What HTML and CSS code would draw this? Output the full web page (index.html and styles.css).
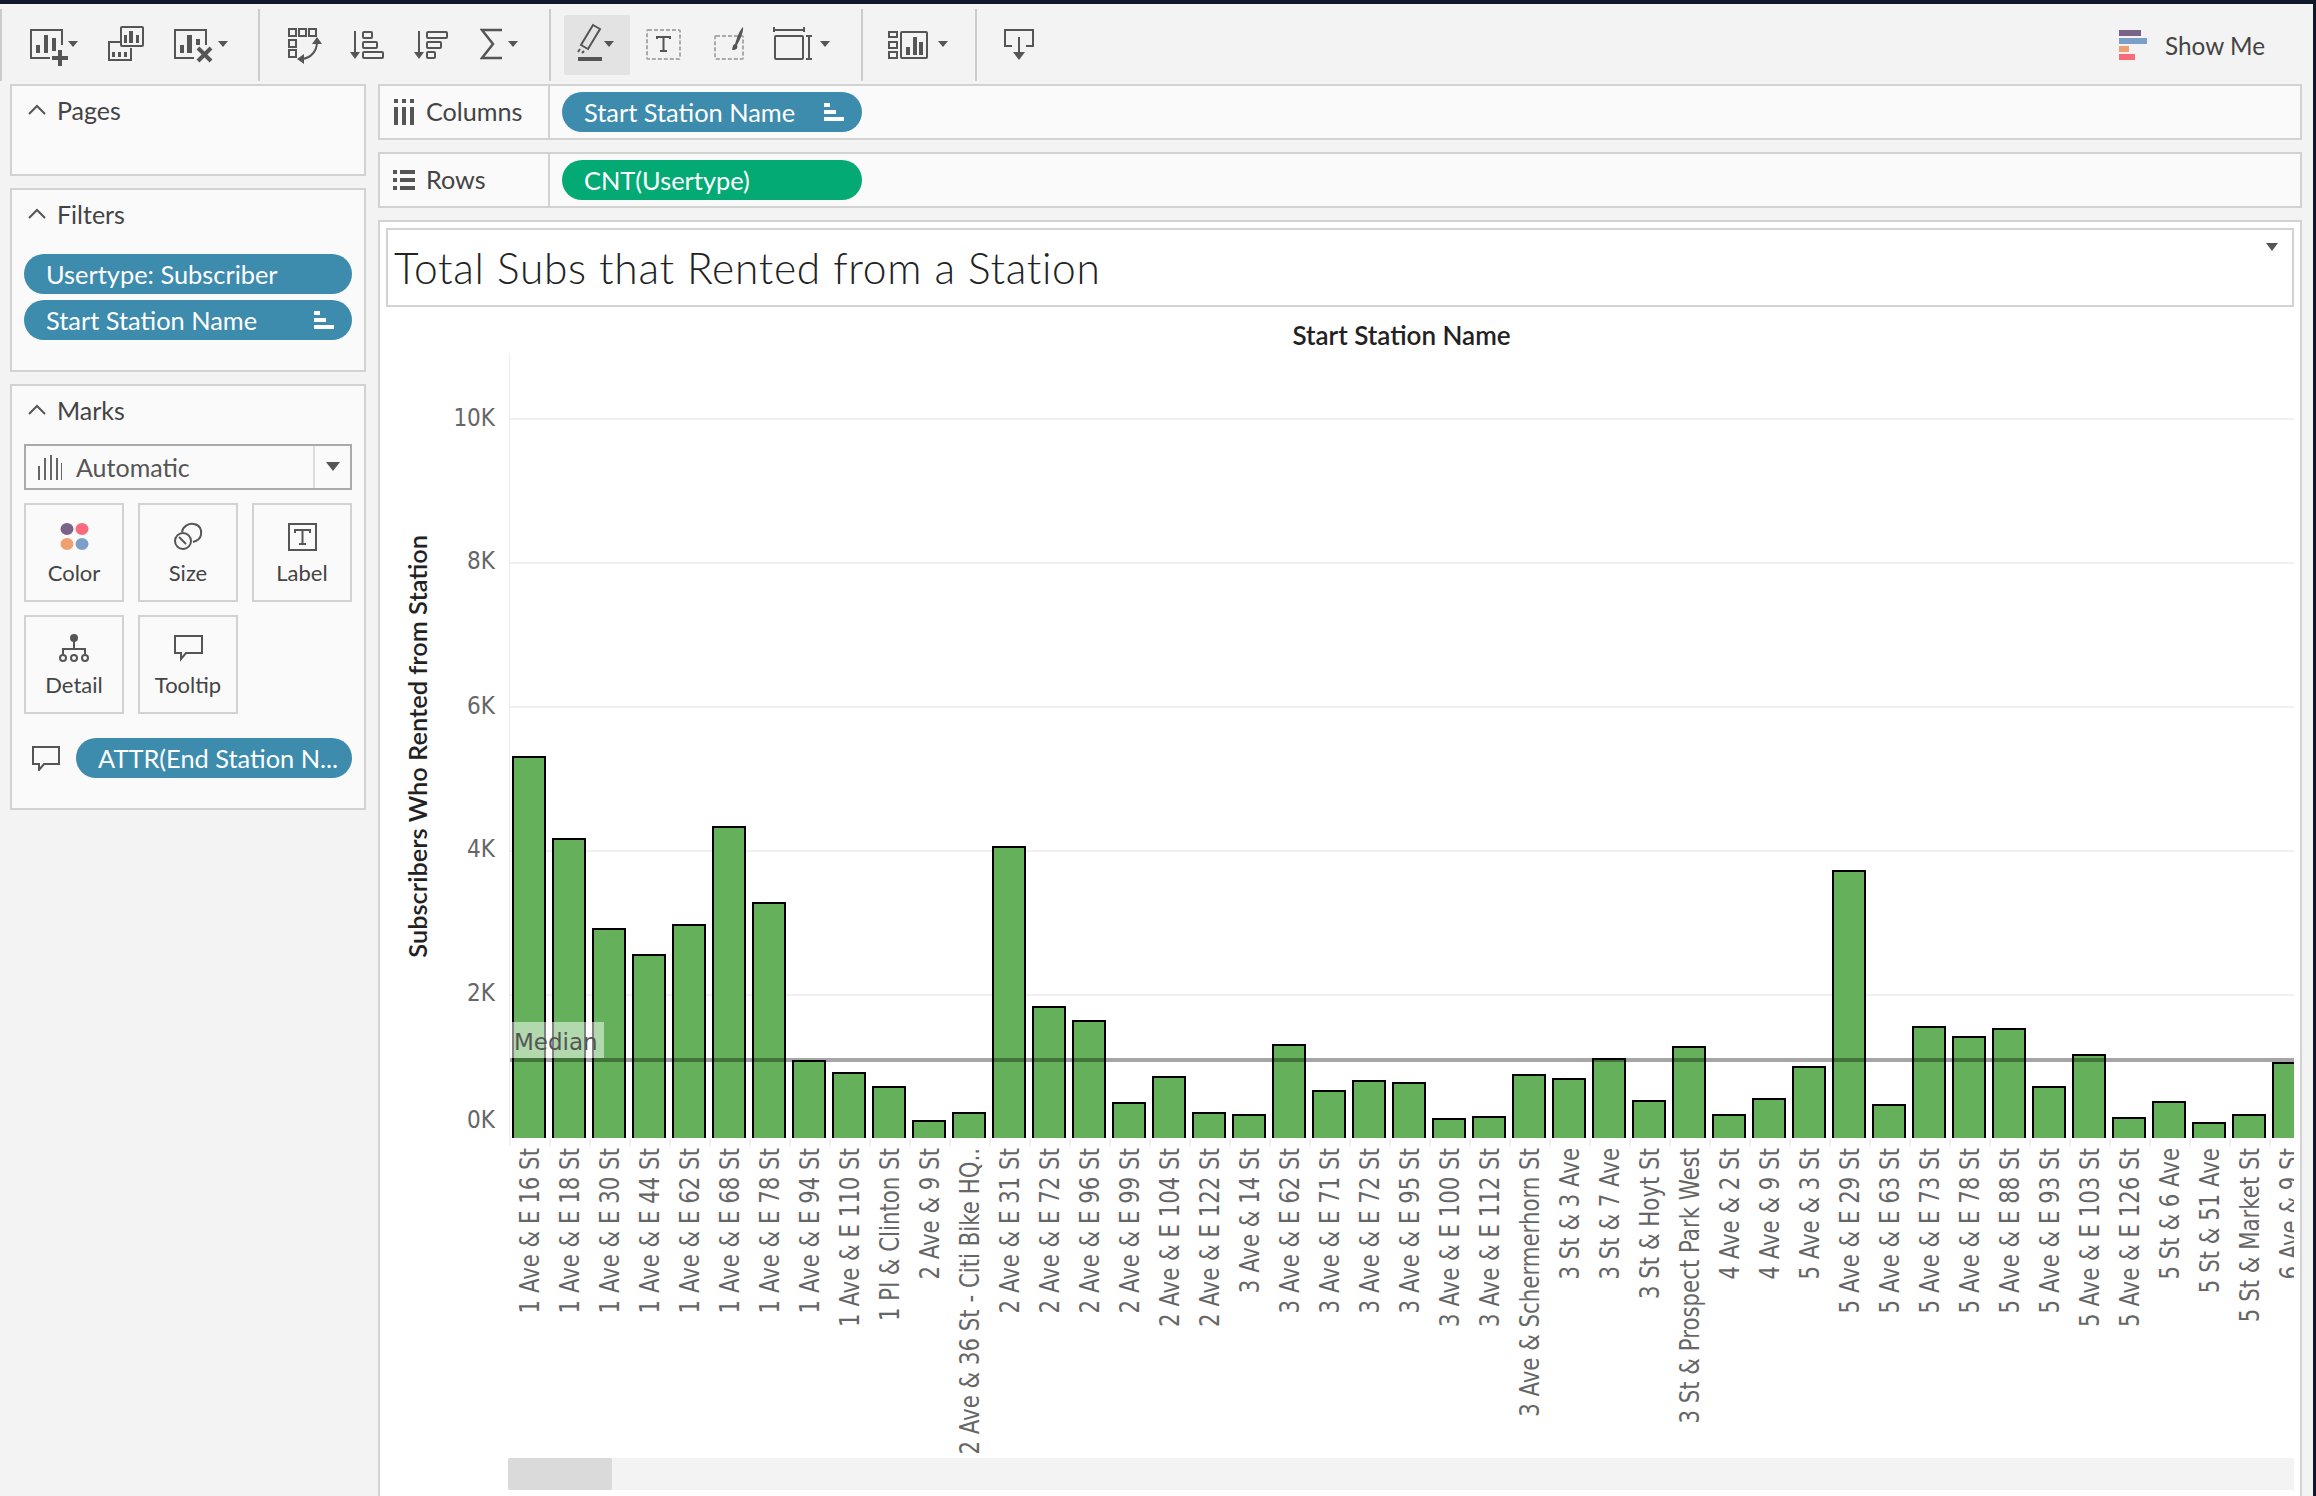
FILE: index.html
```html
<!DOCTYPE html>
<html lang="en">
<head>
<meta charset="utf-8">
<title>Total Subs that Rented from a Station</title>
<link rel="stylesheet" href="styles.css">
</head>
<body>
<div class="app">
  <header class="toolbar">
    <div class="tgroup tg1">
      <svg class="ic" width="48" height="60"><path class="ln" d="M32 30V15H1V43H20"/><path class="fl" d="M6 30h4v8H6zM14 20h4v18h-4zM22 23h4v13h-4zM22 41h16v4H22zM28 35h4v16h-4zM38 26h10l-5 6z"/></svg>
      <svg class="ic" width="36" height="60"><rect class="ln" x="13" y="12" width="22" height="19" rx="1"/><path class="ln" d="M12 27H1V45H23V33"/><path class="fl" d="M16 20h3v8h-3zM21 16h4v12h-4zM28 20h3v8h-3zM4 37h3v5H4zM10 37h3v5h-3zM16 37h3v5h-3z"/></svg>
      <svg class="ic" width="54" height="60"><path class="ln" d="M32 30V15H1V43H20"/><path class="fl" d="M6 30h4v8H6zM13 20h5v18h-5zM22 24h4v6h-4zM44 26h10l-5 6z"/><path class="lnb" d="M24 33l13 13M37 33L24 46"/></svg>
    </div>
    <div class="tgroup tg2">
      <svg class="ic" width="34" height="60"><path class="ln" d="M1 14h7v7H1zM11 14h7v7h-7zM21 14h7v7h-7zM1 25h7v7H1zM1 35h7v7H1zM29 27C29 36 23 43 14 44"/><path class="fl" d="M29 22l5 7H24zM9 44l7-5v10z"/></svg>
      <svg class="ic" width="36" height="60"><path class="ln" d="M5 16V38"/><path class="fl" d="M0 37h10l-5 7z"/><rect class="ln" x="13" y="17" width="9" height="6" rx="1"/><rect class="ln" x="13" y="27" width="14" height="6" rx="1"/><rect class="ln" x="13" y="37" width="20" height="6" rx="1"/></svg>
      <svg class="ic" width="38" height="60"><path class="ln" d="M5 16V38"/><path class="fl" d="M0 37h10l-5 7z"/><rect class="ln" x="13" y="17" width="20" height="6" rx="1"/><rect class="ln" x="13" y="27" width="14" height="6" rx="1"/><rect class="ln" x="13" y="37" width="8" height="6" rx="1"/></svg>
      <svg class="ic" width="38" height="60"><path class="lnm" d="M22 15H2L13 29 2 43H22"/><path class="fl" d="M28 26h10l-5 6z"/></svg>
    </div>
    <div class="tgroup tg3">
      <svg class="ic active" width="66" height="60"><path class="ln" d="M29 10l7 4-12 20-7-4z"/><path class="ln" d="M16 34l-2 3M20 36l-2 2"/><path class="fl" d="M14 42h24v4H14zM40 26h10l-5 6z"/></svg>
      <svg class="ic" width="67" height="60"><rect class="dash" x="17" y="15" width="33" height="29" rx="1"/><path class="ln" d="M27 24V22H40V24M33.500 22V36M30 36H37"/></svg>
      <svg class="ic" width="62" height="60"><rect class="dash" x="18" y="21" width="28" height="23" rx="1"/><path class="fl" d="M46 12c1 4-3 13-6 18 1 3 0 5-5 5 1-2 0-5 3-6 2-6 4-13 8-17z"/></svg>
      <svg class="ic" width="71" height="60"><path class="ln" d="M15 12V17M45 12V17M15 15H45"/><rect class="ln" x="16" y="21" width="28" height="23" rx="1"/><path class="ln" d="M47 21H53M47 44H53M50 21V44"/><path class="fl" d="M61 26h10l-5 6z"/></svg>
    </div>
    <div class="tgroup tg4">
      <svg class="ic" width="60" height="60"><path class="ln" d="M1 17h8v5H1zM1 27h8v6H1zM1 37h8v6H1z"/><rect class="ln" x="13" y="17" width="26" height="26" rx="1"/><path class="fl" d="M18 32h4v8h-4zM25 22h4v18h-4zM31 27h4v13h-4zM50 26h10l-5 6z"/></svg>
    </div>
    <div class="tgroup tg5">
      <svg class="ic" width="38" height="60"><path class="ln" d="M8 31H1V15H29V31H22M15 22V38"/><path class="fl" d="M9 37H21L15 45z"/></svg>
    </div>
    <div class="showme">
      <span class="sm-icon"><i class="sm1"></i><i class="sm2"></i><i class="sm3"></i><i class="sm4"></i></span>
      <span class="sm-text">Show Me</span>
    </div>
  </header>

  <div class="body">
    <aside class="sidebar">
      <section class="panel pages">
        <h2 class="phead"><svg class="chev" width="20" height="12"><path d="M2 10l8-8 8 8"/></svg>Pages</h2>
      </section>
      <section class="panel filters">
        <h2 class="phead"><svg class="chev" width="20" height="12"><path d="M2 10l8-8 8 8"/></svg>Filters</h2>
        <div class="pill blue fpill">Usertype: Subscriber</div>
        <div class="pill blue fpill">Start Station Name<span class="sort sort-end"><i></i><i></i><i></i></span></div>
      </section>
      <section class="panel marks">
        <h2 class="phead"><svg class="chev" width="20" height="12"><path d="M2 10l8-8 8 8"/></svg>Marks</h2>
        <div class="dropdown">
          <svg class="marktype" width="26" height="26"><path d="M2 12h2v14H2zM8 4h2v22H8zM14 1h2v25h-2zM20 4h2v22h-2zM25 9h1v17h-1z"/></svg>
          <span class="ddtext">Automatic</span>
          <span class="ddarrow"></span>
        </div>
        <div class="cards">
          <div class="card">
            <svg width="32" height="32"><ellipse cx="9" cy="8" rx="6.500" ry="6" fill="#7b6388"/><ellipse cx="24" cy="8" rx="6.500" ry="6" fill="#f96b7a"/><ellipse cx="9" cy="23" rx="6.500" ry="6" fill="#f0a070"/><ellipse cx="24" cy="23" rx="6.500" ry="6" fill="#7b9fc6"/></svg>
            <span>Color</span>
          </div>
          <div class="card">
            <svg width="32" height="32"><path class="ln" d="M10 11C11 5 17 2 22 3c6 1 8 6 7 11-1 4-4 6-8 7"/><circle class="ln" cx="11" cy="20" r="8"/><path class="ln" d="M7 16l7 7"/></svg>
            <span>Size</span>
          </div>
          <div class="card">
            <svg width="32" height="32"><rect class="ln" x="3" y="3" width="27" height="26"/><path class="ln" d="M9 12V9H24V12M16.500 9V23M13 23H20"/></svg>
            <span>Label</span>
          </div>
          <div class="card">
            <svg width="32" height="32"><circle cx="16" cy="5" r="4" fill="#555"/><path class="ln" d="M16 8V17M5 21V16H27V21"/><circle class="ln" cx="5" cy="25" r="3"/><circle class="ln" cx="16" cy="25" r="3"/><circle class="ln" cx="27" cy="25" r="3"/></svg>
            <span>Detail</span>
          </div>
          <div class="card">
            <svg width="32" height="32"><path class="ln" d="M3 3H30V20H14L9 26V20H3z"/></svg>
            <span>Tooltip</span>
          </div>
        </div>
        <div class="tiprow">
          <svg width="28" height="26"><path class="ln" d="M1 2H27V19H12L7 25V19H1z"/></svg>
          <div class="pill blue tippill">ATTR(End Station N...</div>
        </div>
      </section>
    </aside>

    <main class="content">
      <div class="shelf">
        <div class="shelf-label"><svg width="22" height="26"><path class="fl" d="M1 0h4v4H1zM9 0h4v4H9zM17 0h4v4h-4zM1 8h4v18H1zM9 8h4v18H9zM17 8h4v18h-4z"/></svg><span class="shelf-name">Columns</span></div>
        <div class="pill blue shelf-pill">Start Station Name<span class="sort sort-end"><i></i><i></i><i></i></span></div>
      </div>
      <div class="shelf">
        <div class="shelf-label"><svg width="22" height="26"><path class="fl" d="M0 3h4v4H0zM7 3h15v4H7zM0 11h4v4H0zM7 11h15v4H7zM0 19h4v4H0zM7 19h15v4H7z"/></svg><span class="shelf-name">Rows</span></div>
        <div class="pill green shelf-pill">CNT(Usertype)</div>
      </div>

      <div class="sheet">
        <div class="title">Total Subs that Rented from a Station<span class="title-arrow"></span></div>
        <div class="viz">
          <div class="xheader">Start Station Name</div>
          <div class="ytitle"><span>Subscribers Who Rented from Station</span></div>
          <div class="yticks">
            <span class="ytick" style="top:64px">10K</span>
            <span class="ytick" style="top:207px">8K</span>
            <span class="ytick" style="top:352px">6K</span>
            <span class="ytick" style="top:495px">4K</span>
            <span class="ytick" style="top:639px">2K</span>
            <span class="ytick" style="top:766px">0K</span>
          </div>
          <div class="pane">
            <i class="grid" style="top:64px"></i>
            <i class="grid" style="top:208px"></i>
            <i class="grid" style="top:352px"></i>
            <i class="grid" style="top:496px"></i>
            <i class="grid" style="top:640px"></i>
            <div class="bars">
              <i class="bar" style="height:382px"></i><i class="bar" style="height:300px"></i><i class="bar" style="height:210px"></i><i class="bar" style="height:184px"></i><i class="bar" style="height:214px"></i><i class="bar" style="height:312px"></i><i class="bar" style="height:236px"></i><i class="bar" style="height:78px"></i><i class="bar" style="height:66px"></i><i class="bar" style="height:52px"></i><i class="bar" style="height:18px"></i><i class="bar" style="height:26px"></i><i class="bar" style="height:292px"></i><i class="bar" style="height:132px"></i><i class="bar" style="height:118px"></i><i class="bar" style="height:36px"></i><i class="bar" style="height:62px"></i><i class="bar" style="height:26px"></i><i class="bar" style="height:24px"></i><i class="bar" style="height:94px"></i><i class="bar" style="height:48px"></i><i class="bar" style="height:58px"></i><i class="bar" style="height:56px"></i><i class="bar" style="height:20px"></i><i class="bar" style="height:22px"></i><i class="bar" style="height:64px"></i><i class="bar" style="height:60px"></i><i class="bar" style="height:80px"></i><i class="bar" style="height:38px"></i><i class="bar" style="height:92px"></i><i class="bar" style="height:24px"></i><i class="bar" style="height:40px"></i><i class="bar" style="height:72px"></i><i class="bar" style="height:268px"></i><i class="bar" style="height:34px"></i><i class="bar" style="height:112px"></i><i class="bar" style="height:102px"></i><i class="bar" style="height:110px"></i><i class="bar" style="height:52px"></i><i class="bar" style="height:84px"></i><i class="bar" style="height:21px"></i><i class="bar" style="height:37px"></i><i class="bar" style="height:16px"></i><i class="bar" style="height:24px"></i><i class="bar" style="height:76px"></i>
            </div>
            <i class="median-line"></i>
            <span class="median-label">Median</span>
          </div>
          <div class="xlabels">
            <div class="xl"><span>1 Ave &amp; E 16 St</span></div><div class="xl"><span>1 Ave &amp; E 18 St</span></div><div class="xl"><span>1 Ave &amp; E 30 St</span></div><div class="xl"><span>1 Ave &amp; E 44 St</span></div><div class="xl"><span>1 Ave &amp; E 62 St</span></div><div class="xl"><span>1 Ave &amp; E 68 St</span></div><div class="xl"><span>1 Ave &amp; E 78 St</span></div><div class="xl"><span>1 Ave &amp; E 94 St</span></div><div class="xl"><span>1 Ave &amp; E 110 St</span></div><div class="xl"><span>1 Pl &amp; Clinton St</span></div><div class="xl"><span>2 Ave &amp; 9 St</span></div><div class="xl"><span>2 Ave &amp; 36 St - Citi Bike HQ..</span></div><div class="xl"><span>2 Ave &amp; E 31 St</span></div><div class="xl"><span>2 Ave &amp; E 72 St</span></div><div class="xl"><span>2 Ave &amp; E 96 St</span></div><div class="xl"><span>2 Ave &amp; E 99 St</span></div><div class="xl"><span>2 Ave &amp; E 104 St</span></div><div class="xl"><span>2 Ave &amp; E 122 St</span></div><div class="xl"><span>3 Ave &amp; 14 St</span></div><div class="xl"><span>3 Ave &amp; E 62 St</span></div><div class="xl"><span>3 Ave &amp; E 71 St</span></div><div class="xl"><span>3 Ave &amp; E 72 St</span></div><div class="xl"><span>3 Ave &amp; E 95 St</span></div><div class="xl"><span>3 Ave &amp; E 100 St</span></div><div class="xl"><span>3 Ave &amp; E 112 St</span></div><div class="xl"><span>3 Ave &amp; Schermerhorn St</span></div><div class="xl"><span>3 St &amp; 3 Ave</span></div><div class="xl"><span>3 St &amp; 7 Ave</span></div><div class="xl"><span>3 St &amp; Hoyt St</span></div><div class="xl"><span>3 St &amp; Prospect Park West</span></div><div class="xl"><span>4 Ave &amp; 2 St</span></div><div class="xl"><span>4 Ave &amp; 9 St</span></div><div class="xl"><span>5 Ave &amp; 3 St</span></div><div class="xl"><span>5 Ave &amp; E 29 St</span></div><div class="xl"><span>5 Ave &amp; E 63 St</span></div><div class="xl"><span>5 Ave &amp; E 73 St</span></div><div class="xl"><span>5 Ave &amp; E 78 St</span></div><div class="xl"><span>5 Ave &amp; E 88 St</span></div><div class="xl"><span>5 Ave &amp; E 93 St</span></div><div class="xl"><span>5 Ave &amp; E 103 St</span></div><div class="xl"><span>5 Ave &amp; E 126 St</span></div><div class="xl"><span>5 St &amp; 6 Ave</span></div><div class="xl"><span>5 St &amp; 51 Ave</span></div><div class="xl"><span>5 St &amp; Market St</span></div><div class="xl"><span>6 Ave &amp; 9 St</span></div>
          </div>
          <div class="scrollbar"><div class="thumb"></div></div>
        </div>
      </div>
    </main>
  </div>
</div>
</body>
</html>
```
FILE: styles.css
```css
* { box-sizing: border-box; }
html, body { margin: 0; padding: 0; }
body {
  width: 2316px;
  height: 1496px;
  overflow: hidden;
  background: #f3f3f3;
  font-family: "Lato", "Liberation Sans", sans-serif;
  color: #333;
}
.app {
  width: 2316px;
  height: 1496px;
  border-top: 4px solid #10182b;
  border-right: 3px solid #10182b;
  overflow: hidden;
}
svg { display: block; flex: none; }
.ln { fill: none; stroke: #555; stroke-width: 2; }
.lnm { fill: none; stroke: #555; stroke-width: 2.500; }
.lnb { fill: none; stroke: #555; stroke-width: 4; }
.fl { fill: #555; }
.dash { fill: none; stroke: #aaa; stroke-width: 2; stroke-dasharray: 4 2; }

/* toolbar */
.toolbar {
  height: 80px;
  display: flex;
  padding-top: 5px;
  align-items: flex-start;
}
.tgroup {
  height: 72px;
  display: flex;
  align-items: center;
  border-left: 2px solid #ccc;
}
.tg1 { width: 258px; padding-left: 28px; gap: 30px; }
.tg2 { width: 291px; padding-left: 28px; gap: 28px; }
.tg3 { width: 312px; padding-left: 13px; }
.tg4 { width: 114px; padding-left: 25px; }
.tg5 { width: 200px; padding-left: 27px; }
.active { background: #e3e3e3; border-radius: 2px; }
.showme {
  margin-left: auto;
  margin-right: 48px;
  height: 72px;
  display: flex;
  align-items: center;
  gap: 18px;
}
.sm-icon { display: flex; flex-direction: column; gap: 2px; width: 28px; }
.sm-icon i { display: block; height: 6px; }
.sm1 { width: 22px; background: #7b6388; }
.sm2 { width: 28px; background: #7b9fc6; }
.sm3 { width: 10px; background: #f0a070; }
.sm4 { width: 16px; background: #f96b7a; }
.sm-text { font-size: 24.300px; color: #444; }

/* layout */
.body { display: flex; height: 1412px; }
.sidebar {
  width: 378px;
  padding-left: 10px;
  padding-right: 12px;
  display: flex;
  flex-direction: column;
}
.panel {
  background: #fafafa;
  border: 2px solid #d2d2d2;
  padding: 0 12px;
}
.pages { height: 92px; }
.filters { height: 184px; margin-top: 12px; }
.marks { height: 426px; margin-top: 12px; }
.phead {
  margin: 0;
  height: 49px;
  padding-left: 3px;
  padding-bottom: 1px;
  display: flex;
  align-items: center;
  gap: 10px;
  font-size: 25px;
  font-weight: 400;
  color: #444;
}
.chev path { fill: none; stroke: #555; stroke-width: 2; }

/* pills */
.pill {
  display: flex;
  align-items: center;
  height: 40px;
  border-radius: 20px;
  color: #fff;
  font-size: 25.400px;
  padding-left: 22px;
  white-space: nowrap;
}
.blue { background: #3d8bad; }
.green { background: #03aa73; }
.fpill { width: 328px; margin-bottom: 6px; }
.filters .fpill:first-of-type { margin-top: 15px; }
.sort {
  display: flex;
  flex-direction: column;
  gap: 3px;
  width: 20px;
}
.sort i { display: block; height: 4px; background: #fff; }
.sort i:nth-child(1) { width: 6px; }
.sort i:nth-child(2) { width: 12px; }
.sort i:nth-child(3) { width: 20px; }
.sort-end { margin-left: auto; margin-right: 18px; }

/* marks */
.dropdown {
  height: 46px;
  border: 2px solid #aaa;
  display: flex;
  align-items: center;
  padding-left: 10px;
  margin-top: 9px;
}
.marktype path { fill: #666; }
.ddtext { margin-left: 14px; font-size: 25px; color: #555; }
.ddarrow {
  margin-left: auto;
  width: 37px;
  height: 42px;
  border-left: 2px solid #ddd;
  position: relative;
}
.ddarrow::after {
  content: "";
  position: absolute;
  left: 11px;
  top: 16px;
  border-left: 7px solid transparent;
  border-right: 7px solid transparent;
  border-top: 9px solid #555;
}
.cards {
  display: grid;
  grid-template-columns: repeat(3, 100px);
  grid-auto-rows: 99px;
  gap: 13px 14px;
  margin-top: 13px;
}
.card {
  border: 2px solid #d2d2d2;
  display: flex;
  flex-direction: column;
  align-items: center;
  padding-top: 16px;
  font-size: 22px;
  color: #444;
  line-height: 28px;
  gap: 6px;
}
.tiprow {
  display: flex;
  align-items: center;
  margin-top: 24px;
  gap: 16px;
  padding-left: 8px;
}
.tippill { width: 276px; }

/* shelves */
.content { width: 1924px; display: flex; flex-direction: column; }
.shelf {
  height: 56px;
  margin-bottom: 12px;
  background: #fafafa;
  border: 2px solid #d2d2d2;
  display: flex;
  align-items: center;
}
.shelf-label {
  width: 170px;
  height: 100%;
  border-right: 2px solid #d2d2d2;
  display: flex;
  align-items: center;
  gap: 11px;
  padding-left: 13px;
  font-size: 25.200px;
  color: #444;
}
.shelf-name { padding-bottom: 3px; }
.shelf-pill { width: 300px; margin-left: 12px; }

/* sheet */
.sheet {
  flex: 1;
  background: #fff;
  border: 2px solid #d2d2d2;
  border-bottom: 0;
  padding: 6px 6px 0;
}
.title {
  height: 79px;
  border: 2px solid #d2d2d2;
  display: flex;
  align-items: center;
  padding-left: 6px;
  position: relative;
  font-size: 42.500px;
  font-weight: 300;
  letter-spacing: .7px;
  color: #222;
}
.title-arrow {
  position: absolute;
  right: 14px;
  top: 13px;
  border-left: 6px solid transparent;
  border-right: 6px solid transparent;
  border-top: 8px solid #555;
}
.viz {
  display: grid;
  grid-template-columns: 62px 61px 1785px;
  grid-template-rows: 47px 784px 320px 32px;
}
.xheader {
  grid-column: 3;
  grid-row: 1;
  display: flex;
  align-items: center;
  justify-content: center;
  padding-top: 8px;
  font-size: 26px;
  font-weight: 600;
  color: #222;
}
.ytitle {
  grid-column: 1;
  grid-row: 2;
  display: flex;
  align-items: center;
  justify-content: center;
  font-size: 25.400px;
  font-weight: 600;
  color: #222;
}
.ytitle span { writing-mode: vertical-rl; transform: rotate(180deg); white-space: nowrap; }
.yticks {
  grid-column: 2;
  grid-row: 2;
  position: relative;
  font-family: "DejaVu Sans Condensed", "DejaVu Sans", sans-serif;
  font-stretch: condensed;
  font-size: 24px;
  color: #666;
}
.ytick { position: absolute; right: 14px; transform: translateY(-50%); }
.pane {
  grid-column: 3;
  grid-row: 2;
  position: relative;
  overflow: hidden;
  border-left: 1px solid #ececec;
}
.grid { position: absolute; left: 0; right: 0; height: 2px; background: #f0f0f0; }
.bars {
  position: relative;
  height: 100%;
  display: flex;
  align-items: flex-end;
  gap: 6px;
  padding-left: 2px;
}
.bar {
  flex: none;
  width: 34px;
  background: #65b15b;
  border: 2px solid #000;
  border-bottom: 0;
}
.median-line {
  position: absolute;
  left: 0; right: 0;
  top: 704px;
  height: 4px;
  background: rgba(0, 0, 0, .35);
}
.median-label {
  position: absolute;
  left: 2px;
  top: 668px;
  width: 92px;
  height: 36px;
  padding-left: 2px;
  background: rgba(255, 255, 255, .5);
  font-family: "DejaVu Sans", sans-serif;
  font-size: 23px;
  line-height: 40px;
  color: #555;
}
.xlabels {
  grid-column: 3;
  grid-row: 3;
  display: flex;
  overflow: hidden;
  background-image: repeating-linear-gradient(90deg, #f0f0f0 0 2px, transparent 2px 40px);
  background-size: 100% 8px;
  background-repeat: no-repeat;
  font-family: "DejaVu Sans Condensed", "DejaVu Sans", sans-serif;
  font-stretch: condensed;
  font-size: 23.700px;
  color: #666;
}
.xl {
  flex: none;
  width: 40px;
  padding-top: 10px;
  padding-left: 2px;
  display: flex;
  justify-content: center;
  align-items: flex-start;
}
.xl span {
  writing-mode: vertical-rl;
  white-space: nowrap;
  transform: rotate(180deg) scaleX(1.1);
}
.scrollbar {
  grid-column: 3;
  grid-row: 4;
  margin-left: -1px;
  background: #f3f3f3;
}
.thumb { width: 104px; height: 100%; background: #dadada; border-radius: 2px; }
```
